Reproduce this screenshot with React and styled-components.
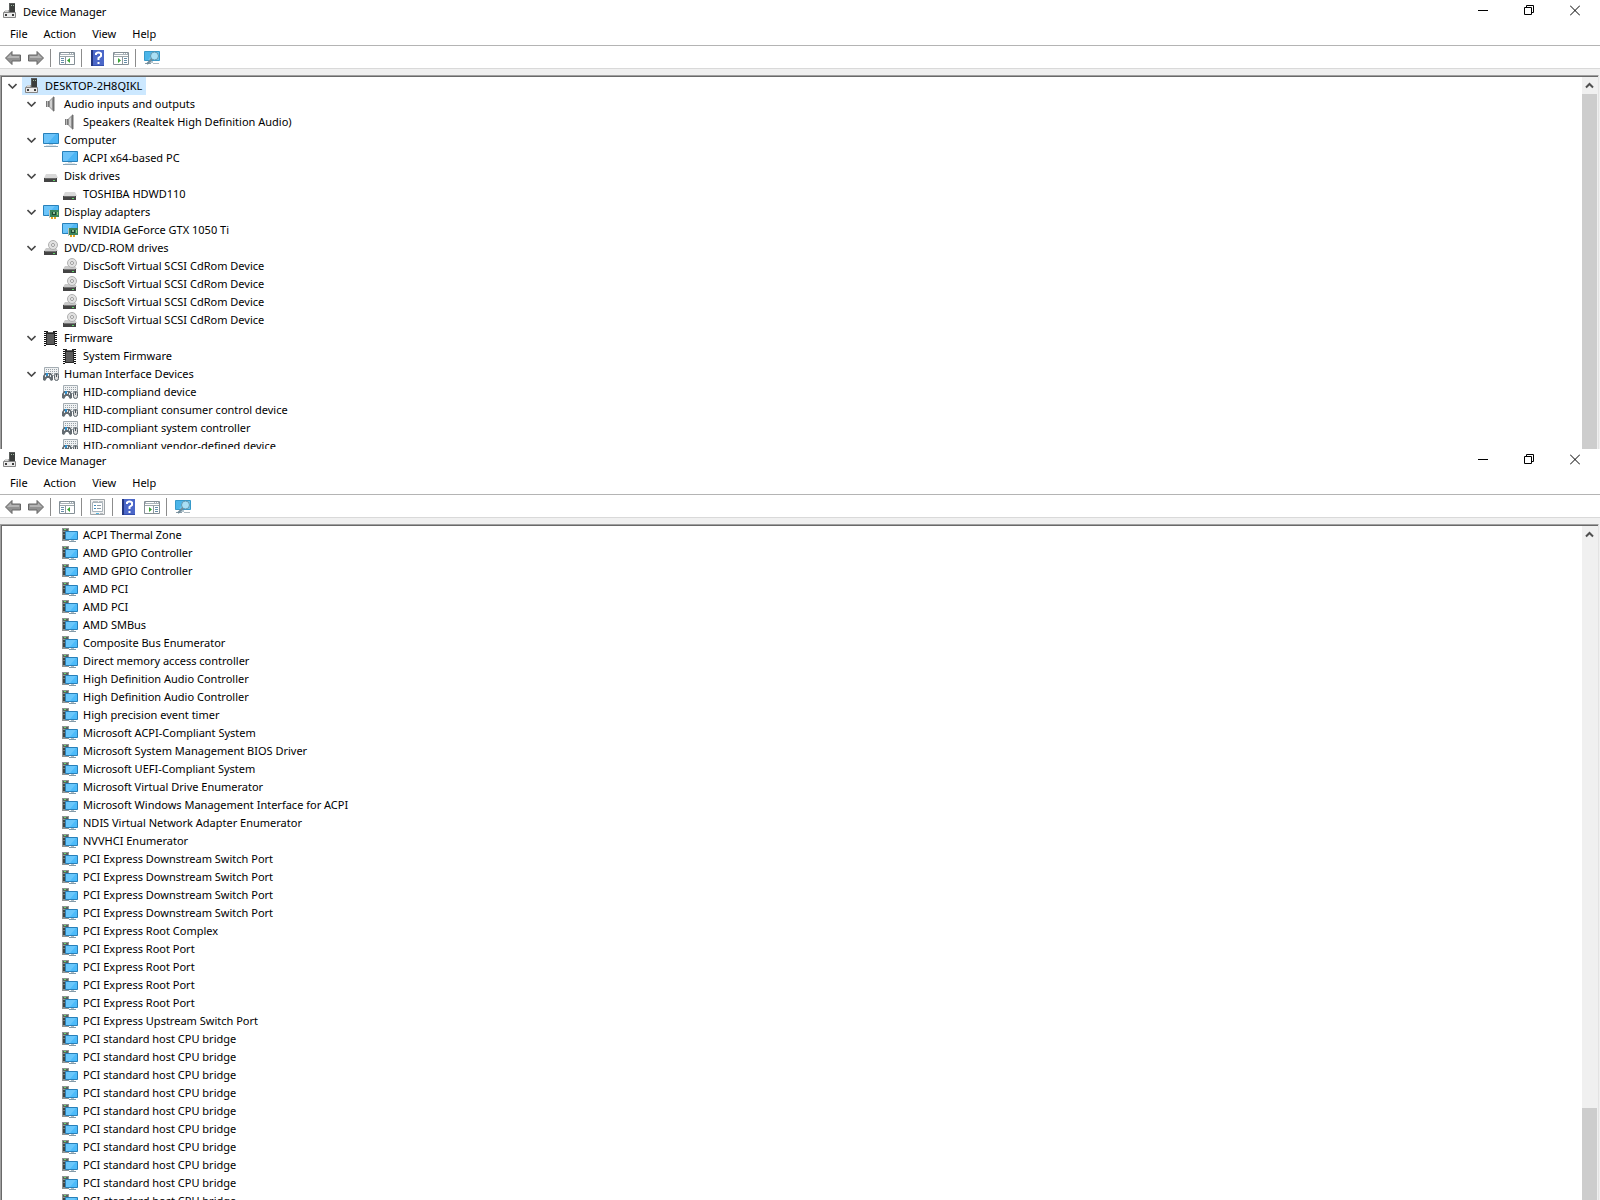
import React from 'react';
import styled, { createGlobalStyle } from 'styled-components';

const GlobalStyle = createGlobalStyle`
    * {
        box-sizing: border-box;
    }

    body {
        margin: 0;
        background: #fff;
        color: #000;
        font-family: "Noto Sans", "Open Sans", sans-serif;
        font-size: 11px;
        line-height: 18px;
    }

    button {
        font: inherit;
        color: inherit;
        background: none;
        border: 0;
        margin: 0;
        padding: 0;
    }

    svg {
        display: block;
        flex: none;
    }
`;

const Screen = styled.main`
    display: grid;
    grid-template-rows: minmax(0, 449fr) minmax(0, 751fr);
    height: 100vh;
    overflow: hidden;
`;

const Window = styled.section`
    display: flex;
    flex-direction: column;
    min-height: 0;
    overflow: hidden;
`;

const TitleBar = styled.header`
    display: flex;
    align-items: flex-start;
    height: 23px;
    padding: 0 2px;
`;

const Title = styled.h1`
    display: flex;
    flex: 1;
    gap: 5px;
    margin: 0;
    padding-top: 3px;
    font-size: 11px;
    font-weight: 400;
`;

const CaptionButton = styled.button`
    display: flex;
    justify-content: center;
    align-items: center;
    width: 46px;
    height: 21px;

    &:hover {
        background: #e5e5e5;
    }
`;

const MenuBar = styled.nav`
    display: flex;
    height: 23px;
    padding: 1px 2px;
    border-bottom: 1px solid #b4b4b4;
`;

const MenuItem = styled.button`
    padding: 0 8px;

    &:hover {
        background: #e5f3ff;
    }
`;

const ToolBar = styled.div`
    display: flex;
    align-items: center;
    height: 23px;
    padding: 2px 1px 0;
    border-bottom: 1px solid #d9d9d9;
`;

const ToolButton = styled.button`
    padding: 2px 3px 2px 4px;
`;

const Separator = styled.span`
    width: 1px;
    height: 18px;
    margin: 0 4px 0 3px;
    background: #8c8c8c;
`;

const Client = styled.div`
    display: flex;
    flex: 1;
    min-height: 0;
    padding: 6px 1px 0 0;
    background: #f0f0f0;
`;

const Frame = styled.div`
    display: flex;
    flex: 1;
    min-height: 0;
    border: 0 solid #a0a0a0;
    border-width: 1px 1px 0;
    border-right-color: #e3e3e3;
`;

const Pane = styled.div`
    display: flex;
    flex: 1;
    min-height: 0;
    padding-right: 1px;
    border: 0 solid #696969;
    border-width: 1px 0 0 1px;
`;

const Tree = styled.ul`
    flex: 1;
    min-height: 0;
    margin: 0;
    padding: 0 0 0 1px;
    overflow: hidden;
    list-style: none;
    background: #fff;
`;

const Row = styled.li`
    display: flex;
    height: 18px;
    padding-left: ${(props) => props.$level * 19}px;
    white-space: nowrap;
`;

const Toggle = styled.button`
    display: flex;
    justify-content: center;
    align-items: center;
    width: 19px;
`;

const Label = styled.span`
    display: flex;
    align-items: center;
    gap: 5px;
    padding: 0 4px 0 2px;
    background: ${(props) => (props.$selected ? '#cce8ff' : 'transparent')};
`;

const ScrollBar = styled.div`
    display: flex;
    flex-direction: column;
    width: 15px;
    background: #f0f0f0;
`;

const ScrollButton = styled.button`
    display: flex;
    justify-content: center;
    align-items: center;
    height: 17px;
`;

const Track = styled.div`
    display: flex;
    flex: 1;
    flex-direction: column;
`;

const TrackGap = styled.div`
    flex: 0 0 ${(props) => props.$start}%;
`;

const Thumb = styled.div`
    flex: 1;
    background: #cdcdcd;
`;

const Icon = ({ children }) => (
    <svg width="16" height="16" viewBox="0 0 16 16" aria-hidden="true">
        {children}
    </svg>
);

const ManagerIcon = () => (
    <Icon>
        <path d="M7 0h6v9H7z" fill="#5c5f5e" />
        <path d="M8 1h5v8H8z" fill="#3b3d3c" />
        <path d="M9 2h1v1H9zM11 2h1v1h-1z" fill="#9ab59d" />
        <path d="M3 7h3v2H3z" fill="#d2d2d2" />
        <path d="M2 8h1v1H2zM6 7h1v2H6z" fill="#a8a8a8" />
        <path d="M1.5 9.5h12v5h-12z" fill="#ececec" stroke="#858585" />
        <path d="M3 11h2v2H3zM10 11h2v2h-2z" fill="#3c3c3c" />
    </Icon>
);

const SpeakerIcon = () => (
    <Icon>
        <path d="M3 5h3v6H3z" fill="#777" />
        <path d="M4 5h1v6H4z" fill="#bbb" />
        <path d="M6 5l5-5v16l-5-5z" fill="#929292" />
        <path d="M7 5l2-2v10l-2-2z" fill="#d0d0d0" />
        <path d="M10 1h1v14h-1z" fill="#6f6f6f" />
        <path d="M11 1h1v14h-1z" fill="#b8b8b8" />
    </Icon>
);

const ComputerIcon = () => (
    <Icon>
        <path d="M.5 1.5h15v10H.5z" fill="#4cb5f5" stroke="#2880b9" />
        <path d="M1 2h12L5 11H1z" fill="#6cc3f9" />
        <path d="M6 12h4v1H6z" fill="#c5d2dc" />
        <path d="M1 14h14v1H1z" fill="#8ba6b8" />
        <path d="M3 13h10v1H3z" fill="#dce7ed" />
    </Icon>
);

const DiskIcon = () => (
    <Icon>
        <path d="M3 6h10l2 4H1z" fill="#d8d8d8" />
        <path d="M1 10h13v4H1z" fill="#444" />
        <path d="M2 10h11v1H2z" fill="#6b6b6b" />
        <path d="M10 12h2v1h-2z" fill="#60d568" />
    </Icon>
);

const DisplayIcon = () => (
    <Icon>
        <path d="M.5 1.5h15v10H.5z" fill="#50b8f5" stroke="#2880b9" />
        <path d="M1 2h11L4 11H1z" fill="#6cc5fa" />
        <path d="M6 6h10v7H6z" fill="#3c845c" />
        <path d="M6 6h1v8H6z" fill="#b9c3bb" />
        <path d="M9 8h4v3H9z" fill="#1e4932" />
        <path d="M10 8h2v2h-2z" fill="#90bc98" />
        <path d="M8 13h2v2H8zM11 13h2v2h-2z" fill="#e6a521" />
        <path d="M14 8h1v3h-1z" fill="#9bcb79" />
    </Icon>
);

const DiscIcon = () => (
    <Icon>
        <path d="M3 8h10l2 3H1z" fill="#c9c9c9" />
        <circle cx="10" cy="5" r="4.500" fill="#e2e2e2" stroke="#b0b0b0" />
        <circle cx="10" cy="5" r="1.500" fill="#fff" stroke="#999" />
        <path d="M1 11h13v4H1z" fill="#444" />
        <path d="M2 11h11v1H2z" fill="#777" />
        <path d="M10 13h2v1h-2z" fill="#5fd769" />
    </Icon>
);

const FirmwareIcon = () => (
    <Icon>
        <path
            d="M2 1v15M13 1v15"
            fill="none"
            stroke="#111"
            strokeWidth="2"
            strokeDasharray="1 1"
        />
        <path d="M3 1h2v1h5V1h2v14H3z" fill="#2a2a2a" />
        <path d="M4 4h7v10H4z" fill="#5b5b5b" />
        <path d="M5 2h5v1H5z" fill="#666" />
    </Icon>
);

const HidIcon = () => (
    <Icon>
        <path d="M1.5 1.5h14v8h-14z" fill="#f0f2f3" stroke="#a4adb3" />
        <path
            d="M3 3.500h11M3 5.500h11M3 7.500h11"
            fill="none"
            stroke="#98a1a8"
            strokeDasharray="1 1"
        />
        <path d="M2 7h6l2 3v4l-2 1-2-3H4l-2 3-2-1v-4z" fill="#646c72" />
        <path d="M3 7h2v2l-1 1H3z" fill="#2d91d1" />
        <path d="M2 9h1v2H2zM7 9h1v2H7zM5 8h1v2H5z" fill="#e3e9ed" />
        <rect x="11.500" y="7.500" width="4" height="7" rx="2" fill="#ddd" stroke="#59636a" />
        <path d="M13 8h1v3h-1z" fill="#4e565c" />
    </Icon>
);

const SystemIcon = () => (
    <Icon>
        <path d="M0 1h7v13H0z" fill="#8f9392" />
        <path d="M1 2h5v2H1z" fill="#5b605d" />
        <path d="M2 2h2v1H2z" fill="#69da70" />
        <path d="M1 5h2v7H1z" fill="#414644" />
        <path d="M1 7h2v1H1z" fill="#777d7a" />
        <path d="M3.500 4.500h12v8h-12z" fill="#4dbbfa" stroke="#2880b9" />
        <path d="M4 5h10l-6 7H4z" fill="#6ac7fb" />
        <path d="M9 13h3v1H9z" fill="#b1bec6" />
        <path d="M7 14h7v1H7z" fill="#849ba9" />
    </Icon>
);

const BackIcon = () => (
    <Icon>
        <path d="M.5 8L7 1.500v3.500h8.500v6H7v3.500z" fill="#929292" stroke="#666" />
        <path d="M2 8l4-4v2h8v2z" fill="#b4b4b4" />
    </Icon>
);

const ForwardIcon = () => (
    <Icon>
        <path d="M15.500 8L9 1.500v3.500H.500v6H9v3.500z" fill="#929292" stroke="#666" />
        <path d="M14 8l-4-4v2H2v2z" fill="#b4b4b4" />
    </Icon>
);

const PaneWindow = () => (
    <>
        <path d="M.5 2.500h15v12H.5z" fill="#fff" stroke="#858f96" />
        <path d="M1 3h14v2H1z" fill="#aab3b9" />
        <path d="M2 3h8v1H2zM11 3h1v1h-1zM13 3h1v1h-1z" fill="#fff" />
        <path d="M1 6.500h14" stroke="#9ca5aa" />
    </>
);

const ConsoleTreeIcon = () => (
    <Icon>
        <PaneWindow />
        <path d="M6.500 7v7" stroke="#8d979e" />
        <path d="M2 8.500h3M2 10.500h3M2 12.500h3" stroke="#668da8" />
        <path d="M8 10.500L11 8v5z" fill="#39a535" />
    </Icon>
);

const ActionPaneIcon = () => (
    <Icon>
        <PaneWindow />
        <path d="M9.500 7v7" stroke="#8d979e" />
        <path d="M11 8.500h3M11 10.500h3M11 12.500h3" stroke="#668da8" />
        <path d="M8 10.500L5 8v5z" fill="#39a535" />
    </Icon>
);

const PropertiesIcon = () => (
    <Icon>
        <path d="M.5.5h14v15H.5z" fill="#f1f1f1" stroke="#a0a5a8" />
        <path d="M2.500 3.500h10v9h-10z" fill="#fff" stroke="#a9b3ba" />
        <path d="M3 2.500h5M9 2.500h4" stroke="#b8bfc3" />
        <path d="M4 6h2v1H4zM4 9h2v1H4z" fill="#3b89bb" />
        <path d="M7 6.500h4M7 9.500h4" stroke="#8999a4" />
        <path d="M6 14h3v1H6z" fill="#54b6e0" />
        <path d="M10 14h3v1h-3z" fill="#b5bbc0" />
    </Icon>
);

const HelpIcon = () => (
    <Icon>
        <path d="M1 0h13v16H1z" fill="#344fae" />
        <path d="M3 0h11v15H3z" fill="#4b67c8" />
        <path d="M1 0h2v16H1z" fill="#243780" />
        <path
            d="M6 5V3.500Q8.500 1.500 11 3.500V6L8.500 8v2"
            fill="none"
            stroke="#fff"
            strokeWidth="2"
        />
        <path d="M7.500 12h2v2h-2z" fill="#fff" />
    </Icon>
);

const ScanIcon = () => (
    <Icon>
        <path d="M.5 1.500h15v9H.5z" fill="#69c3ed" stroke="#3699c9" />
        <path d="M1 2h8L4 10H1z" fill="#4bb5e9" />
        <path d="M6 11h3v2H6z" fill="#b4c5ce" />
        <path d="M1 13.500h6" stroke="#869ba8" />
        <circle cx="10.500" cy="6" r="4" fill="#a9dff5" stroke="#6597af" />
        <path d="M8 9l-5 5" stroke="#718b99" strokeWidth="2" />
        <path d="M9 13.500h6" stroke="#acbac2" />
    </Icon>
);

const ChevronDown = () => (
    <svg width="9" height="6" viewBox="0 0 9 6" aria-hidden="true">
        <path d="M.5 1l4 4 4-4" fill="none" stroke="#484848" strokeWidth="1.600" />
    </svg>
);

const ChevronUp = () => (
    <svg width="9" height="7" viewBox="0 0 9 7" aria-hidden="true">
        <path d="M1 5.500L4.500 2 8 5.500" fill="none" stroke="#505050" strokeWidth="2" />
    </svg>
);

const MinimizeGlyph = () => (
    <svg width="10" height="11" viewBox="0 0 10 11" aria-hidden="true">
        <path d="M0 5h10v1H0z" />
    </svg>
);

const RestoreGlyph = () => (
    <svg width="10" height="11" viewBox="0 0 10 11" aria-hidden="true">
        <path d="M.5 2.500h7v7h-7zM2.500 2V.500h7v7H8" fill="none" stroke="#000" />
    </svg>
);

const CloseGlyph = () => (
    <svg width="10" height="11" viewBox="0 0 10 11" aria-hidden="true">
        <path d="M0 .5l10 10M10 .5l-10 10" fill="none" stroke="#000" />
    </svg>
);

const icons = {
    manager: ManagerIcon,
    speaker: SpeakerIcon,
    computer: ComputerIcon,
    disk: DiskIcon,
    display: DisplayIcon,
    disc: DiscIcon,
    firmware: FirmwareIcon,
    hid: HidIcon,
    system: SystemIcon,
};

const categories = [
    ['speaker', 'Audio inputs and outputs', ['Speakers (Realtek High Definition Audio)']],
    ['computer', 'Computer', ['ACPI x64-based PC']],
    ['disk', 'Disk drives', ['TOSHIBA HDWD110']],
    ['display', 'Display adapters', ['NVIDIA GeForce GTX 1050 Ti']],
    ['disc', 'DVD/CD-ROM drives', Array(4).fill('DiscSoft Virtual SCSI CdRom Device')],
    ['firmware', 'Firmware', ['System Firmware']],
    ['hid', 'Human Interface Devices', [
        'HID-compliand device',
        'HID-compliant consumer control device',
        'HID-compliant system controller',
        'HID-compliant vendor-defined device',
    ]],
];

const deviceRows = [
    { level: 0, icon: 'manager', name: 'DESKTOP-2H8QIKL', open: true, selected: true },
    ...categories.flatMap(([icon, name, devices]) => [
        { level: 1, icon, name, open: true },
        ...devices.map((device) => ({ level: 2, icon, name: device })),
    ]),
];

const systemRows = [
    'ACPI Thermal Zone',
    'AMD GPIO Controller',
    'AMD GPIO Controller',
    'AMD PCI',
    'AMD PCI',
    'AMD SMBus',
    'Composite Bus Enumerator',
    'Direct memory access controller',
    'High Definition Audio Controller',
    'High Definition Audio Controller',
    'High precision event timer',
    'Microsoft ACPI-Compliant System',
    'Microsoft System Management BIOS Driver',
    'Microsoft UEFI-Compliant System',
    'Microsoft Virtual Drive Enumerator',
    'Microsoft Windows Management Interface for ACPI',
    'NDIS Virtual Network Adapter Enumerator',
    'NVVHCI Enumerator',
    ...Array(4).fill('PCI Express Downstream Switch Port'),
    'PCI Express Root Complex',
    ...Array(4).fill('PCI Express Root Port'),
    'PCI Express Upstream Switch Port',
    ...Array(10).fill('PCI standard host CPU bridge'),
].map((name) => ({ level: 2, icon: 'system', name }));

const TreeRow = ({ level, icon, name, open, selected }) => {
    const Glyph = icons[icon];
    return (
        <Row role="treeitem" aria-level={level + 1} aria-expanded={open} aria-selected={!!selected} $level={level}>
            {open ? (
                <Toggle aria-label={`Collapse ${name}`}>
                    <ChevronDown />
                </Toggle>
            ) : (
                <Toggle as="span" />
            )}
            <Label $selected={selected}>
                <Glyph />
                {name}
            </Label>
        </Row>
    );
};

const DeviceManager = ({ rows, properties, scrollStart }) => (
    <Window aria-label="Device Manager">
        <TitleBar>
            <Title>
                <ManagerIcon />
                Device Manager
            </Title>
            <CaptionButton aria-label="Minimize"><MinimizeGlyph /></CaptionButton>
            <CaptionButton aria-label="Restore"><RestoreGlyph /></CaptionButton>
            <CaptionButton aria-label="Close"><CloseGlyph /></CaptionButton>
        </TitleBar>
        <MenuBar>
            <MenuItem>File</MenuItem>
            <MenuItem>Action</MenuItem>
            <MenuItem>View</MenuItem>
            <MenuItem>Help</MenuItem>
        </MenuBar>
        <ToolBar role="toolbar">
            <ToolButton aria-label="Back"><BackIcon /></ToolButton>
            <ToolButton aria-label="Forward"><ForwardIcon /></ToolButton>
            <Separator />
            <ToolButton aria-label="Show/Hide Console Tree"><ConsoleTreeIcon /></ToolButton>
            <Separator />
            {properties && (
                <>
                    <ToolButton aria-label="Properties"><PropertiesIcon /></ToolButton>
                    <Separator />
                </>
            )}
            <ToolButton aria-label="Help"><HelpIcon /></ToolButton>
            <ToolButton aria-label="Show/Hide Action Pane"><ActionPaneIcon /></ToolButton>
            <Separator />
            <ToolButton aria-label="Scan for hardware changes"><ScanIcon /></ToolButton>
        </ToolBar>
        <Client>
            <Frame>
                <Pane>
                    <Tree role="tree" aria-label="Devices">
                        {rows.map((row, index) => (
                            <TreeRow key={index} {...row} />
                        ))}
                    </Tree>
                    <ScrollBar>
                        <ScrollButton aria-label="Scroll up"><ChevronUp /></ScrollButton>
                        <Track>
                            <TrackGap $start={scrollStart} />
                            <Thumb />
                        </Track>
                    </ScrollBar>
                </Pane>
            </Frame>
        </Client>
    </Window>
);

const App = () => {
    return (
        <>
            <GlobalStyle />
            <Screen>
                <DeviceManager rows={deviceRows} scrollStart={0} />
                <DeviceManager rows={systemRows} scrollStart={86} properties />
            </Screen>
        </>
    );
}

export default App;
